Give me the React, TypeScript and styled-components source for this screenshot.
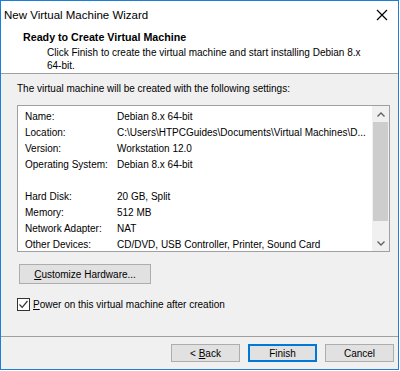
import React from "react";
import styled, { createGlobalStyle } from "styled-components";

const GlobalStyle = createGlobalStyle`
  html, body {
    margin: 0;
    padding: 0;
    background: #fff;
  }
  body {
    font-family: "Liberation Sans", Arial, sans-serif;
    font-size: 10px;
    color: #000;
  }
`;

interface IRow {
  label: string;
  value: string;
}

const rows: (IRow | null)[] = [
  { label: "Name:", value: "Debian 8.x 64-bit" },
  {
    label: "Location:",
    value: "C:\\Users\\HTPCGuides\\Documents\\Virtual Machines\\D...",
  },
  { label: "Version:", value: "Workstation 12.0" },
  { label: "Operating System:", value: "Debian 8.x 64-bit" },
  null,
  { label: "Hard Disk:", value: "20 GB, Split" },
  { label: "Memory:", value: "512 MB" },
  { label: "Network Adapter:", value: "NAT" },
  { label: "Other Devices:", value: "CD/DVD, USB Controller, Printer, Sound Card" },
];

// Wizard dialog
export default function App() {
  return (
    <>
      <GlobalStyle />
      <Window>
        <TitleBar>
          <Title>New Virtual Machine Wizard</Title>
          <CloseBtn>
            <svg width="12" height="12" viewBox="0 0 12 12">
              <path d="M1 1 L11 11 M11 1 L1 11" stroke="#000" strokeWidth="1.2" />
            </svg>
          </CloseBtn>
        </TitleBar>
        <Header>
          <HeaderTitle>Ready to Create Virtual Machine</HeaderTitle>
          <HeaderText>
            Click Finish to create the virtual machine and start installing Debian 8.x
            <br />
            64-bit.
          </HeaderText>
        </Header>
        <Body>
          <Intro>The virtual machine will be created with the following settings:</Intro>
          <ListBox>
            <ListInner>
              {rows.map((r, i) =>
                r ? (
                  <Row key={i}>
                    <Label>{r.label}</Label>
                    <Value>{r.value}</Value>
                  </Row>
                ) : (
                  <Row key={i} />
                )
              )}
            </ListInner>
            <ScrollBar>
              <Arrow>
                <svg width="8" height="5" viewBox="0 0 8 5">
                  <path d="M0.5 4.5 L4 1 L7.5 4.5" stroke="#606060" strokeWidth="1.3" fill="none" />
                </svg>
              </Arrow>
              <Track>
                <Thumb />
              </Track>
              <Arrow>
                <svg width="8" height="5" viewBox="0 0 8 5">
                  <path d="M0.5 0.5 L4 4 L7.5 0.5" stroke="#606060" strokeWidth="1.3" fill="none" />
                </svg>
              </Arrow>
            </ScrollBar>
          </ListBox>
          <CustomizeBtn>
            <u>C</u>ustomize Hardware...
          </CustomizeBtn>
          <CheckRow>
            <CheckBox>
              <svg width="11" height="11" viewBox="0 0 11 11">
                <path d="M1.5 5.5 L4.2 8.3 L9.5 2" stroke="#333" strokeWidth="1.2" fill="none" />
              </svg>
            </CheckBox>
            <span>
              <u>P</u>ower on this virtual machine after creation
            </span>
          </CheckRow>
        </Body>
        <Footer>
          <Button>
            &lt; <u>B</u>ack
          </Button>
          <Button $primary>Finish</Button>
          <Button>Cancel</Button>
        </Footer>
      </Window>
    </>
  );
}

const Window = styled.div`
  width: 399px;
  height: 370px;
  box-sizing: border-box;
  border: 1px solid #1c7fd6;
  background: #f0f0f0;
  display: flex;
  flex-direction: column;
`;
const TitleBar = styled.div`
  height: 28px;
  background: #fff;
  display: flex;
  align-items: center;
  justify-content: space-between;
  padding-left: 3px;
  padding-right: 8px;
`;
const Title = styled.div`
  font-size: 11.5px;
`;
const CloseBtn = styled.div`
  display: flex;
  align-items: center;
  justify-content: center;
  width: 16px;
  height: 16px;
`;
const Header = styled.div`
  background: #fff;
  padding: 1px 0 1px 22px;
  border-bottom: 1px solid #a0a0a0;
`;
const HeaderTitle = styled.div`
  font-weight: bold;
  font-size: 10.7px;
  line-height: 14px;
`;
const HeaderText = styled.div`
  margin-top: 2px;
  padding-left: 24px;
  line-height: 13px;
`;
const Body = styled.div`
  flex: 1;
  padding: 8px 8px 0 16px;
  border-bottom: 1px solid #a0a0a0;
`;
const Intro = styled.div`
  line-height: 13px;
`;
const ListBox = styled.div`
  margin-top: 10px;
  width: 373px;
  height: 147px;
  box-sizing: border-box;
  border: 1px solid #a0a0a0;
  background: #fff;
  display: flex;
`;
const ListInner = styled.div`
  flex: 1;
  padding: 2px 0 0 7px;
  overflow: hidden;
`;
const Row = styled.div`
  display: flex;
  height: 16px;
  align-items: center;
  white-space: nowrap;
`;
const Label = styled.div`
  width: 92px;
  flex-shrink: 0;
`;
const Value = styled.div``;
const ScrollBar = styled.div`
  width: 17px;
  background: #f0f0f0;
  display: flex;
  flex-direction: column;
`;
const Arrow = styled.div`
  height: 16px;
  display: flex;
  align-items: center;
  justify-content: center;
`;
const Track = styled.div`
  flex: 1;
  padding: 0 1px;
`;
const Thumb = styled.div`
  height: 99px;
  background: #cdcdcd;
`;
const CustomizeBtn = styled.button`
  display: block;
  margin: 12px 0 0 2px;
  width: 132px;
  height: 20px;
  box-sizing: border-box;
  border: 1px solid #adadad;
  background: #e1e1e1;
  font: inherit;
  color: #000;
  padding: 0;
`;
const CheckRow = styled.div`
  display: flex;
  align-items: center;
  gap: 3px;
  margin-top: 14px;
  line-height: 13px;
`;
const CheckBox = styled.div`
  width: 13px;
  height: 13px;
  box-sizing: border-box;
  border: 1px solid #333;
  background: #fff;
  display: flex;
  align-items: center;
  justify-content: center;
`;
const Footer = styled.div`
  height: 32px;
  display: flex;
  justify-content: flex-end;
  gap: 8px;
  padding: 7px 4px 0 0;
  box-sizing: border-box;
`;
const Button = styled.button<{ $primary?: boolean }>`
  width: 69px;
  height: 18px;
  box-sizing: border-box;
  border: 1px solid ${(p) => (p.$primary ? "#0078d7" : "#adadad")};
  box-shadow: ${(p) => (p.$primary ? "inset 0 0 0 1px #0078d7" : "none")};
  background: #e1e1e1;
  font: inherit;
  color: #000;
  padding: 0;
`;
